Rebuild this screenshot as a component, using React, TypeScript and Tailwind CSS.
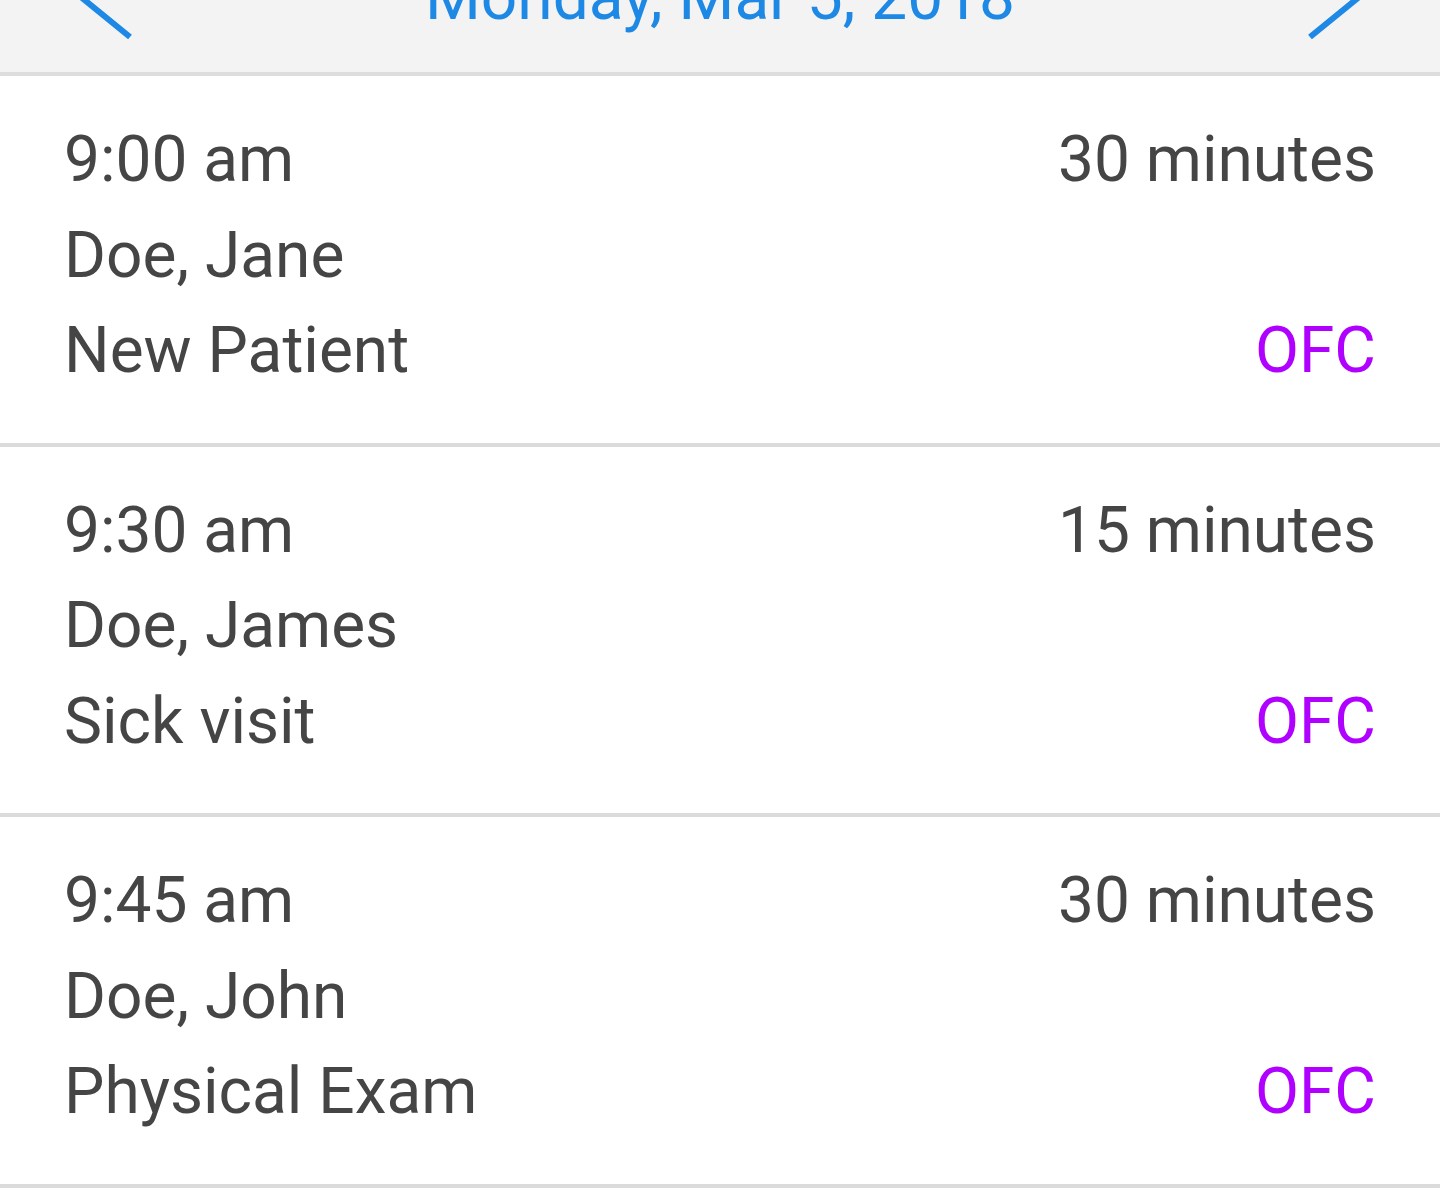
import React from 'react';

interface Appointment {
  time: string;
  duration: string;
  patient: string;
  visitType: string;
  location: string;
}

const appointments: Appointment[] = [
  { time: '9:00 am', duration: '30 minutes', patient: 'Doe, Jane', visitType: 'New Patient', location: 'OFC' },
  { time: '9:30 am', duration: '15 minutes', patient: 'Doe, James', visitType: 'Sick visit', location: 'OFC' },
  { time: '9:45 am', duration: '30 minutes', patient: 'Doe, John', visitType: 'Physical Exam', location: 'OFC' },
];

const ChevronLeft = () => (
  <svg width="100" height="140" viewBox="0 0 100 140" fill="none" className="shrink-0">
    <polyline points="90,23 20,80 90,137" stroke="#1e88e5" strokeWidth="6" />
  </svg>
);

const ChevronRight = () => (
  <svg width="100" height="140" viewBox="0 0 100 140" fill="none" className="shrink-0">
    <polyline points="10,23 80,80 10,137" stroke="#1e88e5" strokeWidth="6" />
  </svg>
);

const AppointmentRow = ({ appt }: { appt: Appointment }) => (
  <div className="border-b-4 border-[#dcdbdc] px-[64px] pt-[36px] pb-[44px] text-[64px] leading-[95.5px] text-[#454545]">
    <div className="flex justify-between">
      <span>{appt.time}</span>
      <span>{appt.duration}</span>
    </div>
    <div>{appt.patient}</div>
    <div className="flex justify-between">
      <span>{appt.visitType}</span>
      <span className="text-[#b000ff]">{appt.location}</span>
    </div>
  </div>
);

export default function App() {
  return (
    <div className="min-h-[1200px] bg-white font-['Roboto',_'Noto_Sans',_sans-serif]">
      <div className="h-[76px] overflow-hidden border-b-4 border-[#dddddd] bg-[#f3f3f3]">
        <div className="-mt-[100px] flex items-start justify-between px-[40px]">
          <ChevronLeft />
          <div className="mt-[66px] text-[64px] leading-[64px] text-[#1e88e5]">Monday, Mar 5, 2018</div>
          <ChevronRight />
        </div>
      </div>
      {appointments.map((appt) => (
        <AppointmentRow key={appt.time} appt={appt} />
      ))}
    </div>
  );
}
